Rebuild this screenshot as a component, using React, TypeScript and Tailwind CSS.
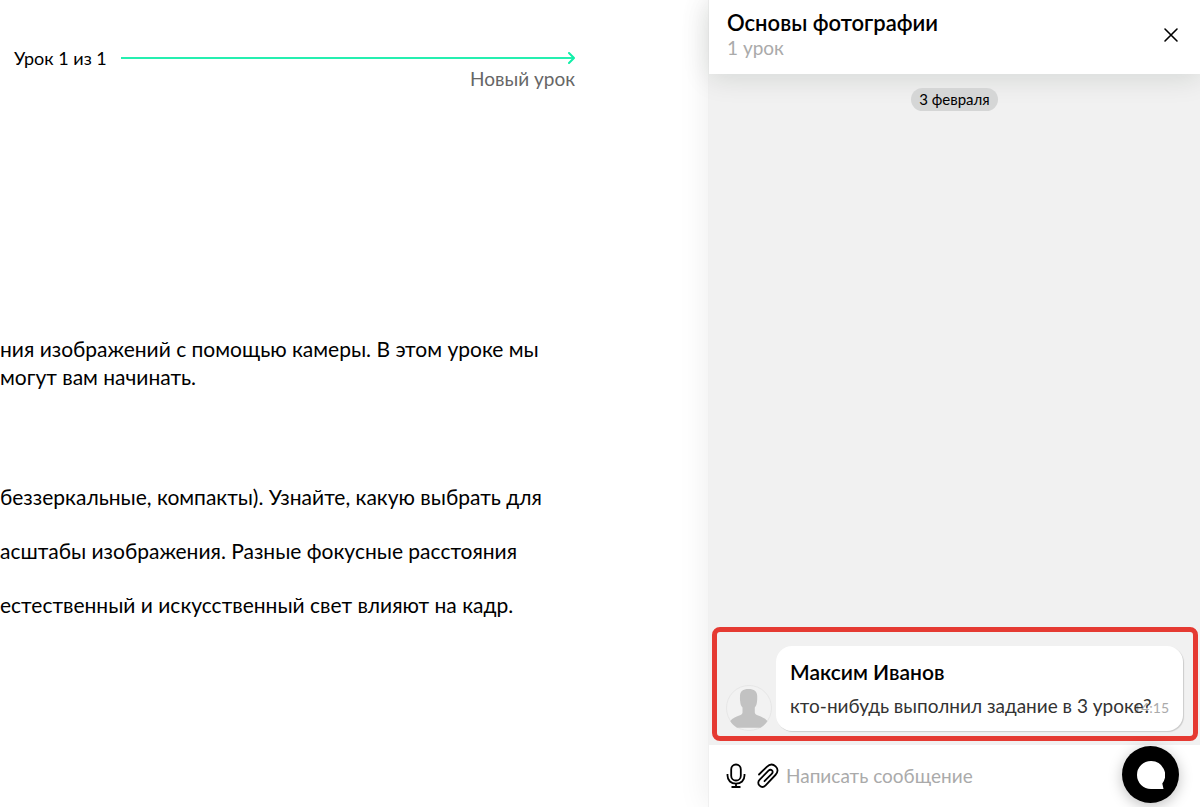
import React, { useState } from 'react';

const intro = ['ния изображений с помощью камеры. В этом уроке мы', 'могут вам начинать.'];

const points = [
  'беззеркальные, компакты). Узнайте, какую выбрать для',
  'асштабы изображения. Разные фокусные расстояния',
  'естественный и искусственный свет влияют на кадр.',
];

const messages = [
  { id: 1, author: 'Максим Иванов', text: 'кто-нибудь выполнил задание в 3 уроке?', time: '14:15' },
];

function Avatar() {
  return (
    <svg viewBox="0 0 46 46" className="w-[46px] h-[46px] shrink-0" aria-hidden="true">
      <circle cx="23" cy="23" r="22.5" fill="#f2f2f2" stroke="#e6e6e6" />
      <path
        d="M22.500 4C17 4 14 6.500 14 11c0 1.800-.2 3.500.2 5.500.2 2.500.8 4.500 2.300 6v5c0 1.300-.8 2-2.500 2.800C10.500 31.800 6.500 33 4.200 36c1.500 2.600 4 5 6.800 6.800h23.500C37.500 41 40 38.600 41.500 36c-2.300-3-6.500-4.200-10-5.700-1.700-.8-2.700-1.500-2.700-2.800v-5c1.300-1.500 2-3.500 2.200-6 .3-2 .2-3.700.2-5.500C31.200 6.500 28 4 22.500 4z"
        fill="#c2c2c2"
      />
    </svg>
  );
}

function MicIcon() {
  return (
    <svg viewBox="0 0 20 26" className="w-5 h-[26px]" fill="none" stroke="#000" strokeWidth="1.8" aria-hidden="true">
      <rect x="5.2" y="1.5" width="9.6" height="16" rx="4.8" />
      <path d="M1.5 11v1.500c0 5 3.600 8.200 8.500 8.200s8.500-3.200 8.500-8.200V11M10 20.700v3.300" />
      <path d="M5.500 24h9" strokeWidth="2" />
    </svg>
  );
}

function ClipIcon() {
  return (
    <svg viewBox="0 0 22 26" className="w-[22px] h-[26px]" fill="none" stroke="#000" strokeWidth="1.8" strokeLinecap="round" aria-hidden="true">
      <path d="M2 11.500l7.800-7.700c3-2.900 6.300-2.800 8.800-.5 2.600 2.400 2.600 5.800-.2 8.700L8.600 22.300c-1.900 2-4.300 2-6 .4-1.800-1.700-1.800-4.100.1-6.100l8.800-8.900c1.200-1.200 2.500-1.200 3.500-.3 1 1 .9 2.300-.3 3.500l-7.200 7.300" />
    </svg>
  );
}

export default function App() {
  const [open, setOpen] = useState(true);
  const [text, setText] = useState('');

  return (
    <div className="flex min-h-screen bg-white text-black font-['Lato','Noto_Sans',sans-serif]">
      <main className="flex-1 min-w-0 overflow-hidden">
        <div className="pl-[14px] pr-[133px] pt-[45px]">
          <div className="flex items-center gap-[14px]">
            <h2 className="text-[18px] leading-[26px] whitespace-nowrap">Урок 1 из 1</h2>
            <div className="flex flex-1 items-center">
              <div className="flex-1 h-[2px] bg-[#25efb0]" />
              <svg viewBox="0 0 7 12" className="w-[7px] h-3 -ml-[6px]" fill="none" stroke="#10efa8" strokeWidth="2" strokeLinecap="round" strokeLinejoin="round" aria-hidden="true">
                <path d="M1 1l5 5-5 5" />
              </svg>
            </div>
          </div>
          <p className="text-right text-[19px] leading-4 text-[#666]">Новый урок</p>
        </div>

        <div className="mt-[248px] text-[21px] leading-7 whitespace-nowrap">
          <p>{intro[0]}<br />{intro[1]}</p>
          <ul className="mt-[92px] flex flex-col gap-[26px]">
            {points.map(point => (
              <li key={point}>{point}</li>
            ))}
          </ul>
        </div>
      </main>

      {open && (
        <aside className="w-[41%] flex flex-col bg-[#f1f1f1] border-l border-[#f0f0f0] shadow-[0_0_30px_rgba(0,30,20,0.08)]">
          <header className="flex items-start justify-between h-[74px] pt-[10px] pl-[18px] pr-5 bg-white shadow-[0_4px_28px_rgba(0,30,20,0.12)]">
            <div>
              <h1 className="text-[22px] leading-[26px] font-semibold">Основы фотографии</h1>
              <p className="text-[19px] leading-6 text-[#aaa]">1 урок</p>
            </div>
            <button type="button" aria-label="Закрыть" onClick={() => setOpen(false)} className="mt-4 cursor-pointer">
              <svg viewBox="0 0 18 18" className="w-[18px] h-[18px]" fill="none" stroke="#000" strokeWidth="1.6" strokeLinecap="round" aria-hidden="true">
                <path d="M3 3l12 12M15 3L3 15" />
              </svg>
            </button>
          </header>

          <div className="flex flex-1 flex-col">
            <div className="mt-[14px] self-center px-2 rounded-full bg-[#d5d6d6] text-[15px] leading-[23px]">3 февраля</div>

            <div className="mt-auto ml-[3px] mr-[2px] mb-1 border-[5px] border-[#e53a32] rounded-lg pt-[14px] pb-[5px] pl-[9px] pr-[10px]">
              {messages.map(msg => (
                <div key={msg.id} className="flex items-end gap-1">
                  <Avatar />
                  <div className="relative flex-1 px-[14px] pt-[14px] pb-3 bg-white rounded-2xl shadow-[1px_1px_1px_rgba(0,0,0,0.16)]">
                    <h3 className="text-[21px] leading-6 font-semibold">{msg.author}</h3>
                    <span className="absolute right-[14px] bottom-[13px] text-[14px] leading-5 text-[#aaa]">{msg.time}</span>
                    <p className="relative mt-2 text-[19px] leading-[27px] text-[#333] whitespace-nowrap">{msg.text}</p>
                  </div>
                </div>
              ))}
            </div>
          </div>

          <form onSubmit={e => e.preventDefault()} className="flex items-center h-[62px] pl-[17px] pr-[90px] bg-white">
            <button type="button" aria-label="Записать голосовое" className="cursor-pointer"><MicIcon /></button>
            <button type="button" aria-label="Прикрепить файл" className="ml-[11px] cursor-pointer"><ClipIcon /></button>
            <input
              type="text" value={text} onChange={e => setText(e.target.value)}
              aria-label="Сообщение" placeholder="Написать сообщение"
              className="ml-[7px] flex-1 min-w-0 text-[19px] leading-6 placeholder:text-[#aaa] focus:outline-none"
            />
          </form>
        </aside>
      )}

      <button
        type="button" aria-label="Чат поддержки"
        className="fixed right-[21px] bottom-1 flex items-center justify-center w-[57px] h-[57px] rounded-full bg-black shadow-[0_3px_14px_rgba(0,0,0,0.25)] cursor-pointer"
      >
        <svg viewBox="0 0 28 28" className="w-7 h-7" fill="#fff" aria-hidden="true">
          <path d="M14 0a14 14 0 1 0 0 28h12.500l-1.200-5.600A14 14 0 0 0 14 0z" />
        </svg>
      </button>
    </div>
  );
}
